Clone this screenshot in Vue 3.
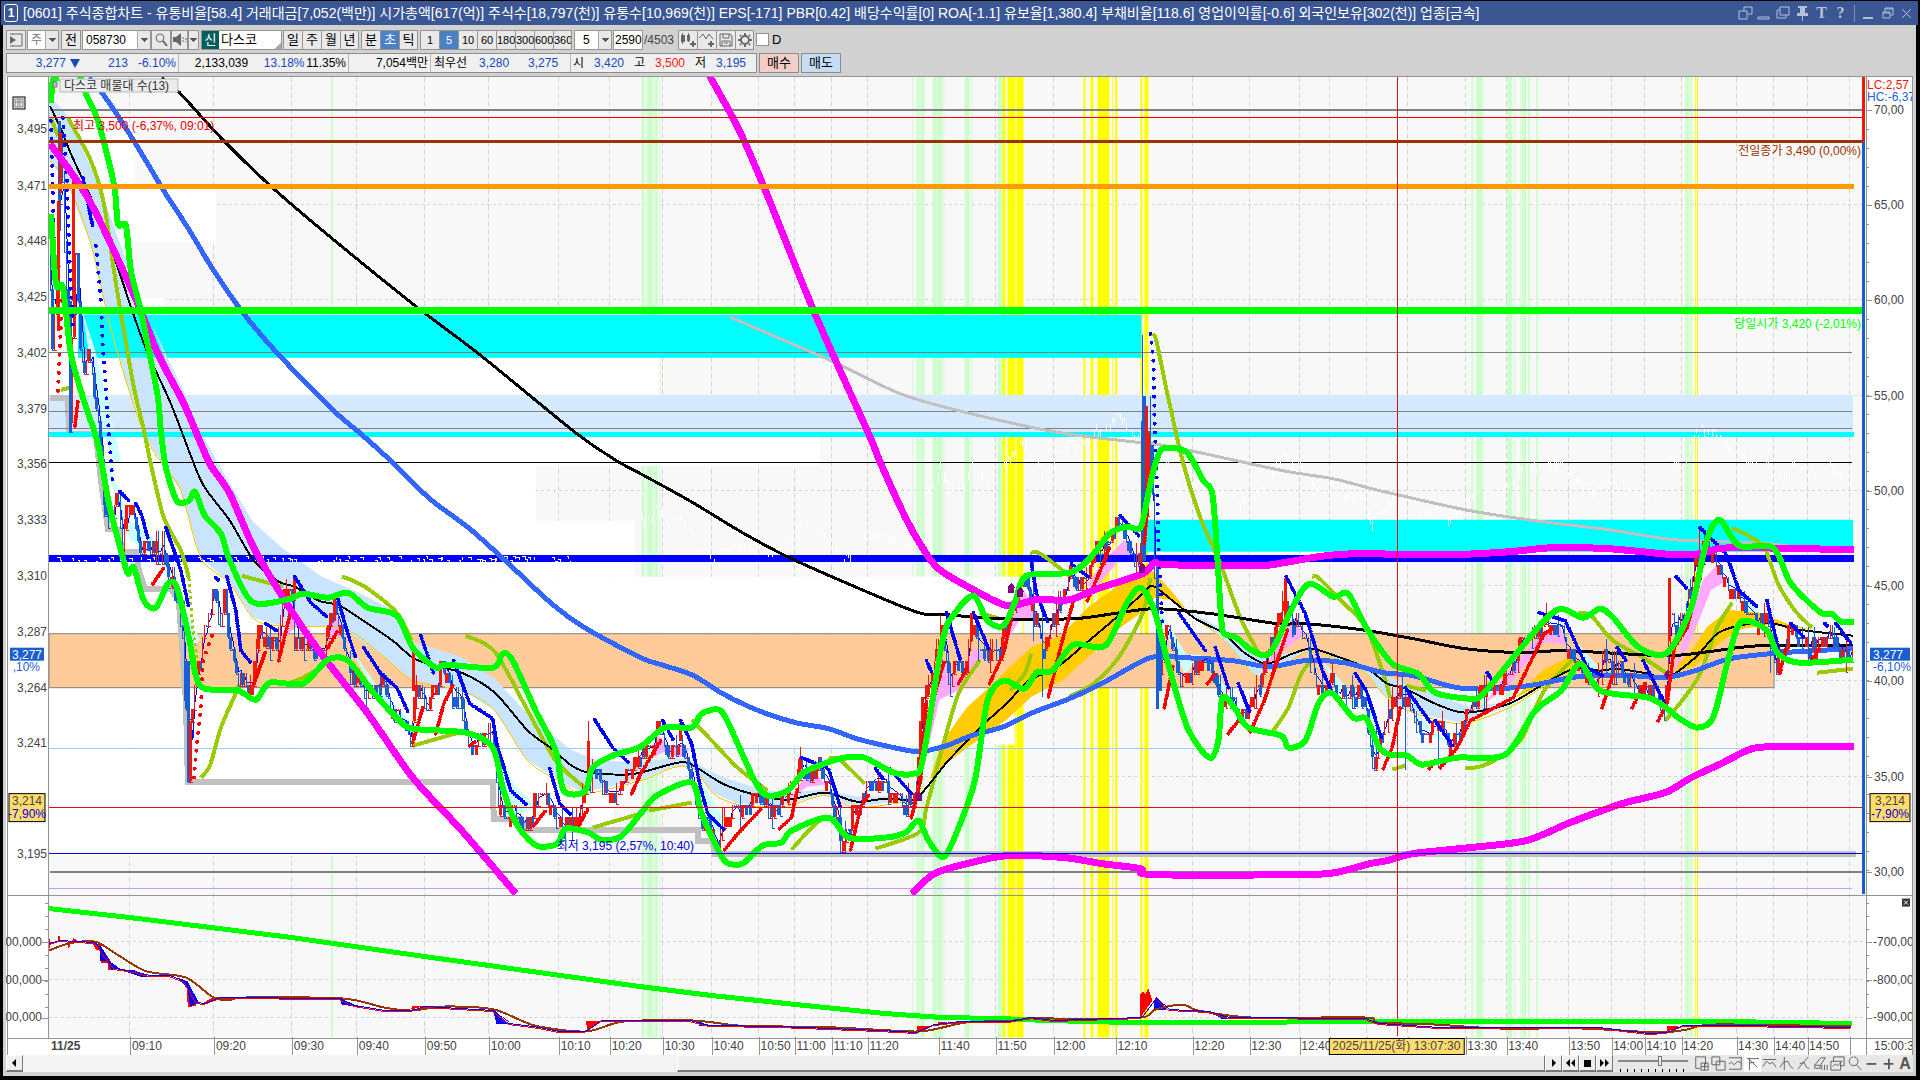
<script setup>
const titleIcons = [
  'M1 6h8v8h-8zM6 6v-4h8v7h-4', 'M1 12h11v2h-11z', 'M4 2h9v8h-9zM4 5h-3v8h9v-3', null
]
const periods = ['일', '주', '월', '년']
const units = ['분', '초', '틱']
const counts = ['1', '5', '10', '60', '180', '300', '600', '3600']

const times = [
  [130, '09:10'], [214, '09:20'], [292, '09:30'], [357, '09:40'], [425, '09:50'], [489, '10:00'],
  [559, '10:10'], [610, '10:20'], [663, '10:30'], [712, '10:40'], [759, '10:50'], [795, '11:00'],
  [832, '11:10'], [868, '11:20'], [939, '11:40'], [996, '11:50'], [1054, '12:00'], [1116, '12:10'],
  [1193, '12:20'], [1250, '12:30'], [1300, '12:40'], [1330, ''], [1367, ''], [1408, ''],
  [1466, '13:30'], [1507, '13:40'], [1569, '13:50'], [1612, '14:00'], [1645, '14:10'],
  [1682, '14:20'], [1737, '14:30'], [1774, '14:40'], [1808, '14:50'], [1850, '']
]
const leftPrices = [
  [128, '3,495'], [185, '3,471'], [240, '3,448'], [296, '3,425'], [352, '3,402'], [408, '3,379'],
  [463, '3,356'], [519, '3,333'], [575, '3,310'], [631, '3,287'], [687, '3,264'], [742, '3,241'], [853, '3,195']
]
const rightScale = [
  [110, '70,00'], [205, '65,00'], [300, '60,00'], [396, '55,00'], [491, '50,00'],
  [586, '45,00'], [681, '40,00'], [777, '35,00'], [872, '30,00']
]
const lowerScale = [[942, '-700,000'], [980, '-800,000'], [1018, '-900,000']]
const minorTicks = Array.from({ length: 41 }, (_, i) => 110 + i * 19).filter(y => y < 893)
const lowerTicks = Array.from({ length: 9 }, (_, i) => 903 + i * 13)

const greenStripes = [
  [331, 2], [642, 3], [647, 7], [655, 3], [660, 1], [913, 1], [917, 3], [921, 4], [933, 5], [939, 4],
  [944, 1], [965, 5], [972, 1], [998, 5], [1472, 2], [1477, 7], [1508, 5], [1515, 1], [1521, 1],
  [1523, 4], [1529, 2], [1537, 2], [1686, 4], [1691, 2]
]
const yellowStripes = [
  [1003, 3], [1008, 8], [1017, 7], [1084, 2], [1091, 3], [1098, 12], [1113, 1], [1116, 2],
  [1141, 2], [1145, 4], [1696, 1], [1698, 1]
]
const volumeBars = [
  [130, 86], [186, 167], [242, 82], [298, 116], [354, 611], [410, 771], [465, 487], [521, 586],
  [577, 974], [633, 974], [689, 966], [745, 586], [800, 565]
]

const smooth = list => {
  const p = list.split(' ').map(pair => pair.split(',').map(Number))
  let d = `M${p[0]}`
  for (let i = 0; i < p.length - 1; i++) {
    const a = p[i - 1] || p[i]
    const b = p[i]
    const c = p[i + 1]
    const e = p[i + 2] || c
    d += `C${b[0] + (c[0] - a[0]) / 7},${b[1] + (c[1] - a[1]) / 7} ${c[0] - (e[0] - b[0]) / 7},${c[1] - (e[1] - b[1]) / 7} ${c}`
  }
  return d
}

const longMa = '161,77 178,91 223,140 273,188 333,239 417,307 478,353 575,432 616,460 640,473 689,500 742,532 787,556 852,585 918,612 946,614 999,618 1073,618 1113,613 1154,608 1211,613 1277,623 1305,623 1361,629 1413,638 1465,648 1522,652 1565,650 1665,655 1708,651 1760,645 1853,645'
const midMa = '49,105 60,128 70,153 87,190 100,220 117,267 133,315 147,353 170,403 193,463 204,487 229,520 253,560 278,581 294,586 318,600 339,605 367,623 392,640 412,657 433,665 461,672 494,692 527,730 551,748 571,765 588,772 624,774 640,772 673,763 689,763 722,783 754,794 787,799 824,792 856,801 885,798 913,799 926,787 946,762 967,740 987,720 1007,702 1028,680 1056,667 1085,643 1118,615 1142,593 1152,585 1171,599 1195,618 1224,633 1244,652 1266,663 1292,653 1312,648 1340,657 1366,667 1387,683 1405,688 1435,703 1465,712 1509,703 1544,683 1574,668 1600,670 1617,668 1648,673 1667,677 1695,657 1717,633 1739,625 1769,622 1799,629 1853,635'
const blueMa = '88,77 102,93 133,140 163,190 187,227 213,270 243,313 277,353 333,410 360,433 390,460 429,498 469,528 510,565 551,603 584,627 640,657 664,665 693,675 722,693 758,710 795,722 828,728 856,738 889,746 918,751 946,745 971,735 1003,726 1032,712 1069,698 1101,683 1150,657 1183,657 1232,660 1269,666 1305,660 1344,662 1383,672 1413,675 1457,687 1500,688 1535,684 1578,676 1630,675 1665,677 1695,670 1730,658 1782,652 1853,648'
const silverMa = '729,316 780,338 833,361 900,393 967,412 1060,432 1133,441 1153,443 1200,452 1283,470 1333,478 1380,490 1465,509 1535,520 1609,529 1674,539 1760,542 1795,546 1854,548'
const magentas = [
  '49,143 67,167 87,197 107,237 137,303 157,353 183,403 200,443 210,465 229,493 253,547 286,603 318,650 367,713 412,777 461,830 515,893',
  '709,75 738,128 765,190 814,312 869,435 879,460 905,517 922,547 938,568 971,588 1007,605 1036,599 1069,599 1097,588 1142,573 1154,562 1167,564 1257,565 1283,562 1318,556 1353,553 1448,554 1509,551 1552,547 1609,548 1674,554 1700,553 1730,547 1854,549',
  '911,893 934,873 967,863 1007,855 1064,857 1101,863 1140,868 1152,874 1301,874 1335,872 1370,863 1387,860 1413,853 1470,847 1526,840 1570,822 1622,803 1665,792 1691,777 1721,763 1752,748 1782,746 1854,746'
]
const bands = [
  '50,102 52,79 58,77',
  '79,75 85,93 97,120 113,183 117,223 125,225 130,270 140,310 150,360 157,397 160,430 165,467 176,500 188,500 194,491 204,515 220,533 229,560 251,601 286,599 302,593 327,597 347,592 367,607 396,615 412,647 435,667 445,664 492,667 502,653 512,660 535,710 555,750 563,790 584,791 592,767 612,755 640,746 664,727 691,727 701,713 718,709 728,723 754,780 767,795 787,790 803,772 824,763 844,757 864,757 893,772 913,773 922,760 942,640 954,613 973,595 987,620 1003,625 1015,600 1026,575 1069,572 1089,558 1109,533 1126,526 1140,527 1147,497 1153,470 1160,450 1170,447 1187,452 1203,480 1212,493 1217,557 1221,620 1224,633 1236,637 1252,650 1270,652 1292,607 1309,583 1333,596 1348,593 1366,627 1392,663 1418,673 1435,692 1470,698 1483,693 1517,652 1544,620 1561,608 1583,617 1600,608 1613,617 1639,647 1667,652 1691,607 1704,550 1712,526 1721,520 1739,545 1773,547 1791,583 1821,612 1832,613 1841,621 1854,621',
  '50,213 55,283 62,287 70,353 83,400 97,443 108,503 122,557 127,573 133,567 143,600 155,607 167,583 176,587 188,637 195,675 204,688 237,690 255,699 269,682 302,683 327,659 347,660 371,690 396,717 412,728 465,732 492,747 502,787 514,820 527,838 539,846 557,843 565,828 588,832 600,839 620,836 640,813 656,795 691,782 701,813 718,850 726,862 742,863 762,845 781,842 791,830 828,817 848,837 885,837 905,832 918,820 928,840 944,856 962,817 975,777 987,700 1003,680 1024,688 1036,672 1052,670 1073,644 1105,645 1126,603 1140,587 1154,610 1167,660 1187,727 1209,757 1218,740 1222,697 1234,707 1248,727 1281,735 1288,747 1305,740 1318,703 1331,692 1353,717 1366,718 1379,747 1390,754 1407,755 1422,764 1457,757 1505,754 1535,710 1561,690 1580,663 1600,690 1648,697 1667,708 1678,717 1697,727 1713,717 1726,667 1737,627 1747,620 1767,630 1778,653 1799,662 1853,659'
]
const olives = [
  '50,117 57,135', '60,389 68,387',
  '67,117 90,160 103,203 113,270 123,330 133,387 143,430 151,468 163,517 180,550 188,577',
  '200,777 209,765 220,727 233,697 239,683', '241,575 282,586', '286,683 302,677 327,662',
  '341,576 350,579 367,588 396,612 411,640', '412,745 465,730', '465,635 494,651 527,710 555,760 584,787',
  '592,827 640,813', '648,810 691,802', '691,719 713,742 738,768 767,790', '791,849 811,827 826,815',
  '828,757 840,760 864,783', '875,848 918,832 926,807 942,747 958,693 979,660', '979,612 999,618',
  '1030,552 1040,553 1069,575', '1010,690 1024,673 1031,653', '1069,696 1093,683 1118,657 1142,613 1150,577',
  '1152,333 1156,340 1167,393 1183,463 1200,517 1220,563 1240,617 1257,650',
  '1273,730 1288,707 1301,673 1314,657', '1312,576 1318,577 1344,603 1366,627 1383,673 1390,697',
  '1405,685 1426,690', '1392,769 1405,765', '1465,768 1483,765 1505,753 1522,737 1544,690 1574,657',
  '1578,612 1591,615 1613,640 1643,657 1667,673', '1665,720 1682,700 1700,673 1717,627 1732,602',
  '1732,527 1752,537 1765,548 1778,583 1795,610 1812,627', '1817,672 1853,668'
]
const support = '49,397 67,397 68,433 95,433 100,480 107,528 119,529 120,551 135,551 138,570 144,588 170,588 178,600 185,700 187,781 492,781 493,818 520,818 525,829 697,829 697,840 712,840 714,853 1856,853'

const blueCloudA = '49,95 67,115 97,180 120,243 145,310 183,390 200,430 220,467 253,522 282,548 322,577 359,593 392,610 412,642 461,657 494,678 527,713 571,750 596,760 640,763 673,758 689,760 722,777 762,790 787,793 824,790 856,797 913,797 913,800 856,807 824,795 783,806 738,804 713,793 693,768 673,767 640,780 584,793 563,783 527,760 494,710 461,690 412,680 384,657 343,628 278,625 253,618 229,583 200,557 180,490 163,465 145,437 125,380 108,320 90,243 67,183 49,160'
const blueClouds = [
  blueCloudA,
  '1187,610 1224,630 1244,642 1264,657 1292,653 1312,648 1340,657 1366,667 1405,683 1444,698 1470,707 1509,702 1509,707 1461,723 1413,712 1387,698 1366,673 1340,660 1312,650 1296,657 1262,678 1252,673 1224,640'
]
const orangeClouds = [
  '915,797 930,780 942,743 967,708 987,690 1015,663 1032,647 1060,637 1089,607 1109,593 1130,577 1152,570 1171,590 1187,610 1171,600 1155,598 1146,610 1122,627 1097,650 1064,680 1032,697 1007,720 979,740 942,767',
  '1516,698 1544,670 1574,655 1591,670 1574,671 1544,685',
  '1667,675 1691,653 1708,627 1730,610 1760,613 1791,625 1817,630 1769,625 1739,630 1721,643 1695,667'
]
const yellowEdge = '49,160 67,183 90,243 108,320 125,380 145,437 163,465 180,490 200,557 229,583 253,618 278,625 343,628 384,657 412,680 461,690 494,710 527,760 563,783 584,793 640,780 673,767 693,768 713,793 738,804 783,806 824,795 856,807 913,800'
const yellowEdgeB = '1187,612 1224,640 1252,673 1262,678 1296,657 1312,650 1340,660 1366,673 1387,698 1413,712 1461,723 1509,707 1544,685'
const pinkClouds = [
  '916,800 926,720 942,655 950,672 960,680 975,648 984,655 960,690 940,700 926,760',
  '1000,655 1012,615 1024,590 1030,600 1040,620 1020,620', '1088,585 1105,560 1125,540 1135,560 1120,560 1095,590',
  '1262,680 1278,640 1294,618 1304,635 1285,650', '1488,700 1515,665 1544,632 1560,625 1568,645 1545,642 1510,685 1480,708',
  '1672,680 1690,620 1704,580 1718,565 1726,582 1712,590 1692,640', '790,800 803,780 818,775 826,785 808,787',
  '650,760 658,735 668,745 690,750 680,758 664,752', '280,640 292,612 306,625 296,628', '327,640 336,612 344,640 336,635'
]
const cyanClouds = [
  '100,450 109,465 130,520 163,545 190,620 200,640 190,650 176,600 160,560 130,540',
  '82,310 95,350 112,420 122,465 112,460 100,420', '345,640 380,690 410,720 412,735 380,700',
  '495,740 515,785 537,808 520,815 502,800', '700,780 722,815 728,830 712,835', '1155,600 1187,655 1202,655 1186,675 1170,640',
  '1205,655 1228,690 1244,715 1226,700', '1322,660 1350,690 1340,697', '1368,700 1381,732 1373,740',
  '1410,700 1430,728 1450,742 1430,738', '1580,645 1600,668 1590,680', '1726,575 1755,605 1770,622 1745,610'
]

const blueSar = [
  '50,120 51,158 52,200 53,250 54,290', '62,117 66,180 69,270 72,325', '82,177 92,227',
  '95,245 100,300 102,347 105,390 110,460 112,485', '119,491 128,500', '135,503 141,515 147,538',
  '165,527 180,570 188,607', '215,577 218,580', '226,576 235,610 240,650 250,662', '265,623 276,630',
  '294,576 310,602 327,617', '337,598 347,633 355,657', '363,647 380,673 396,687 408,713', '420,635 433,673',
  '453,660 469,703 492,718 496,743 510,790 527,805', '549,768 559,803 571,815', '594,719 612,747 629,763',
  '662,720 673,740', '680,720 691,743 699,783 707,813 724,830', '801,757 828,768 840,807', '875,768 884,780',
  '889,768 911,793', '926,660 932,673', '946,612 960,660', '973,612 989,650', '1031,563 1036,593 1048,623',
  '1071,563 1089,577', '1120,515 1140,537', '1150,333 1153,358 1154,413 1157,495 1158,545 1160,583 1162,625',
  '1179,613 1205,650', '1215,647 1228,687', '1238,683 1250,713', '1286,576 1305,613 1322,670 1331,690',
  '1355,673 1366,690 1381,737', '1405,687 1431,723', '1435,720 1452,745', '1487,672 1492,680',
  '1539,612 1565,620 1587,667 1602,675', '1617,647 1626,660', '1643,660 1667,707', '1676,576 1687,588',
  '1700,527 1726,553 1739,590 1758,607', '1767,600 1778,647', '1791,623 1804,637', '1825,623 1828,626', '1836,623 1851,643'
]
const redSar = [
  '61,300 59,345 57,391', '74,425 77,400', '152,583 163,567', '193,777 196,743 200,707 202,660 214,627',
  '253,683 265,650', '278,660 290,610', '327,647 337,630', '412,742 422,707', '435,733 443,703 453,683',
  '469,745 476,740', '533,825 545,810', '578,825 588,807', '631,793 640,773 660,740', '724,849 738,832 762,807',
  '779,828 791,817 797,787', '850,849 860,807 869,793', '911,817 920,780 926,700', '930,708 944,660',
  '958,683 967,667', '989,683 1003,653 1011,617', '1048,696 1060,647 1073,600', '1087,600 1101,567 1109,547',
  '1144,543 1148,490', '1164,707 1173,663', '1207,683 1215,673', '1228,733 1238,720',
  '1250,731 1264,700 1277,660 1288,627', '1383,768 1392,747 1400,707', '1429,768 1435,760',
  '1440,767 1457,747 1470,720 1513,697 1544,633 1554,627', '1602,707 1613,673', '1632,707 1645,683',
  '1658,720 1667,703 1674,647 1687,627 1700,577', '1780,672 1786,647', '1812,658 1821,647'
]
const sparse = ['50,', '62,', '95,', '1150,', '193,', '61,']
const dotGap = list => (sparse.some(s => list.startsWith(s)) ? '0 9' : '0 3')

const prices = [
  [49, 250], [52, 350], [55, 300], [58, 200], [60, 130], [64, 240], [68, 340], [70, 420], [74, 250],
  [76, 250], [80, 350], [85, 370], [88, 340], [92, 370], [97, 415], [100, 450], [105, 505], [110, 525],
  [113, 495], [120, 510], [122, 550], [127, 505], [133, 510], [140, 560], [146, 545], [155, 550], [163, 545],
  [170, 585], [178, 600], [184, 660], [188, 770], [190, 720], [195, 680], [200, 650], [207, 620], [213, 580],
  [219, 620], [224, 600], [229, 640], [240, 680], [252, 680], [258, 625], [266, 640], [276, 650], [282, 600],
  [286, 590], [292, 590], [294, 640], [305, 640], [314, 650], [325, 645], [333, 602], [340, 635], [350, 670],
  [362, 685], [372, 690], [380, 675], [392, 710], [403, 722], [410, 742], [413, 690], [420, 690], [428, 710],
  [435, 680], [443, 665], [452, 685], [460, 700], [468, 740], [478, 740], [492, 725], [497, 800], [505, 810],
  [515, 810], [526, 825], [535, 800], [545, 790], [555, 815], [567, 825], [577, 815], [587, 775], [597, 770],
  [605, 790], [615, 790], [625, 780], [634, 755], [648, 750], [658, 725], [668, 750], [679, 740], [690, 765],
  [697, 810], [702, 830], [706, 815], [717, 848], [722, 825], [732, 810], [740, 810], [750, 795], [762, 790],
  [772, 815], [785, 795], [795, 775], [800, 760], [806, 775], [820, 765], [830, 790], [840, 830], [845, 840],
  [852, 810], [860, 800], [872, 775], [885, 780], [895, 795], [905, 805], [912, 800], [917, 765], [921, 700],
  [926, 680], [930, 690], [935, 650], [942, 620], [948, 680], [955, 660], [965, 670], [971, 620], [980, 640],
  [987, 655], [1000, 645], [1010, 610], [1017, 590], [1024, 565], [1028, 590], [1035, 620], [1044, 650],
  [1050, 620], [1060, 605], [1070, 570], [1080, 590], [1090, 570], [1095, 545], [1102, 550], [1110, 540],
  [1120, 520], [1130, 550], [1137, 560], [1141, 540], [1143, 420], [1146, 500], [1149, 410], [1152, 500],
  [1156, 640], [1160, 680], [1166, 620], [1180, 680], [1190, 670], [1202, 655], [1212, 670], [1222, 700],
  [1232, 700], [1240, 715], [1250, 705], [1262, 670], [1275, 630], [1285, 595], [1290, 620], [1300, 625],
  [1308, 650], [1320, 690], [1330, 680], [1340, 695], [1355, 690], [1365, 700], [1373, 760], [1380, 740],
  [1392, 695], [1405, 690], [1415, 725], [1428, 735], [1438, 720], [1450, 740], [1465, 715], [1475, 695],
  [1485, 690], [1495, 685], [1510, 670], [1520, 640], [1530, 635], [1545, 620], [1558, 625], [1568, 650],
  [1580, 665], [1595, 685], [1605, 655], [1615, 665], [1630, 680], [1645, 690], [1655, 690], [1664, 710],
  [1669, 620], [1675, 620], [1685, 610], [1695, 560], [1705, 545], [1715, 560], [1725, 580], [1735, 590],
  [1745, 600], [1758, 625], [1765, 605], [1775, 665], [1785, 640], [1795, 625], [1805, 645], [1820, 640],
  [1832, 630], [1845, 655], [1853, 650]
]

const noise = n => {
  const v = Math.sin(n * 127.1 + 11.7) * 43758.5453
  return v - Math.floor(v)
}
const priceAt = x => {
  const i = Math.max(1, prices.findIndex(p => p[0] >= x))
  const [x0, y0] = prices[i - 1]
  const [x1, y1] = prices[i]
  return y0 + (y1 - y0) * (x - x0) / (x1 - x0)
}
const tick = y => Math.round(y / 12) * 12

let up = ''
let down = ''
let upBody = ''
let downBody = ''
let ghost = ''
let close = ''
let previous = tick(priceAt(49))
for (let x = 50; x < 1853; x += 2) {
  const y = tick(priceAt(x) + (noise(x) - 0.5) * 14)
  const tail = noise(x * 3) > 0.85 ? 12 : 2
  const rising = y < previous || (y === previous && noise(x * 7) > 0.5)
  const segment = `M${x} ${Math.min(y, previous) - (tail - 2)}V${Math.max(y, previous) + tail}h2`
  if (rising) up += segment
  else down += segment
  if (noise(x * 11) > 0.55) {
    const body = `M${x} ${Math.min(y, previous)}V${Math.max(y, previous, Math.min(y, previous) + 10)}`
    if (rising) upBody += body
    else downBody += body
  }
  close += `${x},${Math.round((priceAt(Math.max(49, x - 4)) + y) / 2)} `
  if (x > 640 && noise(x * 5) > 0.35) {
    const g = Math.round(425 + (y - 545) * 0.45)
    ghost += `M${x} ${g}v${3 + Math.round(noise(x) * 7)}`
  }
  previous = y
}
upBody += 'M413 647V690M588 740V780M680 722V740M971 612V640M1146 405V520M1148 430V500M1285 577V620M1669 577V640M294 576V600M334 598V620M73 177V300M58 200V330'
up += 'M588 720V780M1699 528V570'
downBody += 'M188 660V781M59 120V230M70 300V432M1142 420V560M1144 395V560M1157 560V708M1160 620V690'
down += 'M184 600V700M1142 334V560M1150 395V480M1033 560V640M1042 610V696M845 820V853M1376 720V769M1405 690V769M1438 720V767M1770 620V672'

let flecks = ''
for (let x = 50; x < 570; x += 3) {
  if (noise(x * 2) > 0.6) flecks += `M${x} ${556 + Math.round(noise(x) * 5)}h${1 + Math.round(noise(x + 1) * 3)}v2`
}

const oscillatorGreen = '49,909 130,918 292,938 425,957 640,987 712,996 796,1005 885,1014 942,1018 999,1019 1048,1021 1130,1023 1280,1023 1296,1022 1725,1022 1853,1024'
const oscillatorBrown = '49,951 65,945 82,942 98,943 122,958 147,972 186,978 212,997 229,1001 245,998 343,999 384,1008 412,1011 445,1007 494,1010 535,1026 586,1032 624,1022 693,1021 738,1026 783,1027 836,1028 913,1032 934,1030 967,1023 1015,1021 1040,1018 1073,1020 1142,1018 1156,1010 1183,1005 1199,1011 1252,1018 1366,1018 1378,1023 1435,1025 1500,1029 1582,1029 1660,1033 1688,1030 1717,1025 1852,1027'
const oscillatorBlue = '49,944 60,941 95,943 115,969 135,972 150,976 170,976 185,982 197,1003 205,1004 220,998 340,999 355,1006 385,1011 412,1011 425,1007 460,1009 494,1011 510,1024 540,1028 560,1032 586,1032 602,1021 690,1021 710,1026 780,1027 880,1031 917,1033 935,1025 960,1022 1010,1022 1030,1018 1055,1021 1142,1018 1157,998 1170,1010 1210,1012 1230,1018 1366,1019 1380,1024 1440,1028 1600,1028 1650,1034 1668,1033 1684,1026 1740,1026 1852,1028'
const oscillatorUp = ['49,938 51,944 49,950', '58,940 59,933 60,940', '67,942 69,950 71,942', '73,938 79,942 72,944', '92,943 96,950 100,950 101,963 108,963 108,970 116,970 100,945', '186,980 188,1008 196,1006 190,990', '200,1005 215,997 228,997 210,1003', '411,1010 413,1006 427,1006', '586,1022 602,1021 588,1031', '917,1026 928,1026 930,1028 918,1032', '938,1022 950,1022 938,1026', '1141,1018 1141,995 1144,992 1146,995 1149,989 1153,1001 1148,1008 1142,1017', '1668,1026 1680,1026 1678,1029 1668,1032']
const oscillatorDown = ['94,942 102,948 110,962 120,969 112,971 107,962 100,961 100,948', '120,970 135,971 150,977 140,977', '178,978 188,982 193,992 199,1003 190,1007 188,990', '340,999 350,1003 360,1008 342,1005', '493,1010 509,1024 497,1025', '697,1021 710,1026 700,1027', '1155,1002 1158,998 1167,1010 1155,1010', '1210,1012 1230,1019 1222,1019']

const tools = [
  'M2 1h11v9M2 1v13h5M8 8h8v8h-8zM8 12h8M12 8v8', 'M1 1h9v9h-9zM6 6h10v10h-10z',
  'M1 2h14M1 15h14M1 9l3-2 3 3 4-4 4 2M15 1v14', 'M2 3h14M5 2v14M5 4l9 9M5 8l6-1',
  'M1 4h15M1 12l4-6 4 3 3-2 4 6', 'M6 1v15M1 13l4-6 5-1 3 6 3 2', 'M2 15l12-14M4 9l5-2 3 6 3 1',
  'M2 10l7-8h5l-6 9zM2 10v4h6v-3M10 10v6M13 10v6M16 10v6', 'M1 6h11v10h-11zM4 6v-5h12v10h-4M3 12l3-3 3 2 5-6',
  'M7 1a5 5 0 1 0 1 0M11 10l5 6'
]
</script>

<template>
  <div class="window">
    <header class="title">
      <span class="number">1</span>
      <h1>[0601] 주식종합차트 - 유통비율[58.4] 거래대금[7,052(백만)] 시가총액[617(억)] 주식수[18,797(천)] 유통수[10,969(천)] EPS[-171] PBR[0.42] 배당수익률[0] ROA[-1.1] 유보율[1,380.4] 부채비율[118.6] 영업이익률[-0.6] 외국인보유[302(천)] 업종[금속]</h1>
      <nav class="window-buttons">
        <button v-for="(icon, i) in titleIcons" :key="i" :aria-label="['복제', '내리기', '겹치기', '고정'][i]">
          <svg viewBox="0 0 15 16"><path v-if="icon" :d="icon" /><path v-else class="solid" d="M3 1h9v2h-2v5h3v3h-5v5h-1v-5h-5v-3h3v-5h-2z" /></svg>
        </button>
        <button class="serif">T</button>
        <button class="serif">?</button>
        <i class="divider"></i>
        <button aria-label="최소화"><svg viewBox="0 0 15 16"><path class="solid" d="M2 12h10v2h-10z" /></svg></button>
        <button aria-label="복원"><svg viewBox="0 0 15 16"><path d="M3 7h7v6h-7zM5 7v-4h8v7h-3M5 4h8M3 8h7" /></svg></button>
        <button aria-label="닫기"><svg viewBox="0 0 15 16"><path d="M3 4l9 9M12 4l-9 9" /></svg></button>
      </nav>
    </header>

    <div class="body">
      <div class="toolbar">
        <button class="key" aria-label="메뉴"><svg viewBox="0 0 18 18"><path d="M5 3h10v12h-10M3 3h3M3 15h3" /><path class="solid" d="M3 5l6 4-6 4z" /></svg></button>
        <label class="combo market"><select aria-label="시장"><option>주</option></select></label>
        <button class="key last">전</button>
        <label class="combo code"><input value="058730" aria-label="종목코드" /></label>
        <button class="key" aria-label="검색"><svg viewBox="0 0 18 18"><circle cx="8" cy="7" r="4" /><path class="bold" d="M11 10l4 5" /></svg></button>
        <button class="key sound" aria-label="소리"><svg viewBox="0 0 18 18"><path class="solid" d="M1 6h3l5-4v13l-5-4h-3z" /><path d="M11 6v6M14 7v4" stroke-dasharray="2 1" /></svg></button>
        <button class="drop" aria-label="소리 설정"></button>
        <span class="stock"><b>신</b><input value="다스코" aria-label="종목명" /></span>
        <div class="keys"><button v-for="p in periods" :key="p" class="key">{{ p }}</button></div>
        <div class="keys"><button v-for="u in units" :key="u" class="key" :class="{ on: u === '초' }">{{ u }}</button></div>
        <div class="keys counts"><button v-for="c in counts" :key="c" class="key" :class="{ on: c === '5' }">{{ c }}</button></div>
        <label class="combo interval"><select aria-label="간격"><option>5</option></select></label>
        <input class="range" value="2590" aria-label="조회 개수" />
        <span class="total">/4503</span>
        <div class="keys">
          <button class="key" aria-label="차트 추가"><svg viewBox="0 0 18 18"><path class="solid" d="M2 4h4v7h-4zM8 4h3v6h-3zM3 2h1v11h-1zM9 2h1v9h-1zM11 12h2v-2h2v2h2v2h-2v2h-2v-2h-2z" /></svg></button>
          <button class="key" aria-label="지표 추가"><svg viewBox="0 0 18 18"><path d="M1 7l4-4 3 5 3-5 4 5" /><path class="solid" d="M10 12h2v-2h2v2h2v2h-2v2h-2v-2h-2z" /></svg></button>
          <button class="key" aria-label="저장"><svg viewBox="0 0 18 18"><path d="M3 3h10l2 2v10h-12zM6 3v4h6v-4M5 15v-5h8v5M7 12h4" /></svg></button>
          <button class="key" aria-label="설정"><svg viewBox="0 0 18 18"><circle class="bold" cx="9" cy="9" r="4" /><path class="bold" d="M9 2v2M9 14v2M2 9h2M14 9h2M4 4l1 1M13 13l1 1M4 14l1-1M13 5l1-1" /></svg></button>
        </div>
        <label class="check"><input type="checkbox" /> D</label>
      </div>

      <div class="quotes">
        <div class="quote-box">
          <div class="cell first"><span class="blue w60">3,277</span><span class="arrow"></span><span class="blue w48">213</span><span class="blue w48">-6.10%</span></div>
          <div class="cell second"><span class="w70">2,133,039</span><span class="blue w57">13.18%</span><span class="w41">11.35%</span></div>
          <div class="cell third"><span>7,054백만</span></div>
          <div class="cell fourth"><span>최우선</span><span class="blue w41">3,280</span><span class="blue w48">3,275</span></div>
          <div class="cell fifth"><span>시</span><span class="blue">3,420</span><span>고</span><span class="red">3,500</span><span>저</span><span class="blue">3,195</span></div>
        </div>
        <button class="trade buy">매수</button>
        <button class="trade sell">매도</button>
      </div>

      <main class="chart">
        <svg class="plot" viewBox="6 76 1908 980" role="img" aria-label="다스코 초봉 차트">
          <rect x="6" y="76" width="1908" height="980" fill="#fff" />
          <rect x="49" y="77" width="1817" height="961" fill="#f8f8f8" />
          <g class="grid">
            <path v-for="t in times" :key="t[0]" :d="`M${t[0]} 77V1038`" stroke-dasharray="5 3" />
            <path v-for="r in rightScale.slice(1, 8)" :key="r[0]" :d="`M49 ${r[0]}H1864`" stroke-dasharray="3 3" />
            <path v-for="r in lowerScale" :key="r[0]" :d="`M49 ${r[0]}H1864`" stroke-dasharray="3 3" />
          </g>
          <rect v-for="s in greenStripes" :key="s[0]" :x="s[0]" y="77" :width="s[1]" height="961" fill="#cfc" />
          <rect v-for="s in yellowStripes" :key="s[0]" :x="s[0]" y="77" :width="s[1]" height="961" fill="#ff0" />
          <rect v-for="v in volumeBars" :key="v[0]" x="49" :y="v[0]" :width="v[1]" height="56" fill="#fff" />

          <rect x="49" y="395" width="1805" height="40" fill="#d6eaff" />
          <rect x="78" y="315" width="1064" height="43" fill="#0ff" />
          <rect x="1142" y="520" width="712" height="32" fill="#0ff" />
          <rect x="49" y="634" width="1726" height="54" fill="#fc9" stroke="#808080" />
          <polygon v-for="c in blueClouds" :key="c" :points="c" fill="#c9e4ff" />
          <polygon points="78,315 148,315 165,358 92,358" fill="#0ff" />
          <polygon v-for="c in cyanClouds" :key="c" :points="c" fill="#cff" />
          <polygon v-for="c in orangeClouds" :key="c" :points="c" fill="#fc0" />
          <polygon v-for="c in pinkClouds" :key="c" :points="c" fill="#faf" />

          <g class="lines" transform="translate(1 1)">
            <polyline :points="support" stroke="#c0c0c0" stroke-width="6" />
            <path d="M49 109H1863M49 871H1863" stroke="#808080" stroke-width="2" />
            <path d="M48 352H1852M48 411H1852M48 428H1852" stroke="#808080" />
            <path d="M48 462H1852" stroke="#000" />
            <path d="M48 748H1852" stroke="#9cf" />
            <path d="M48 888H1852" stroke="#c9f" />
            <path d="M48 434H1854" stroke="#0ff" stroke-width="5" />
            <path d="M48 558H1854" stroke="#00f" stroke-width="7" />
            <path :d="flecks" stroke="#fff" />
            <path :d="ghost" stroke="#fff" />
            <path :d="smooth(silverMa)" stroke="#c0c0c0" stroke-width="3" />
            <path :d="smooth(yellowEdge)" stroke="#fc0" />
            <path :d="smooth(yellowEdgeB)" stroke="#fc0" />
            <path v-for="o in olives" :key="o" :d="smooth(o)" stroke="#9c0" stroke-width="4" />
            <path d="M188 577L192 630L197 663" stroke="#9c0" stroke-width="3" stroke-dasharray="3 3" />
            <path :d="smooth(midMa)" stroke="#000" stroke-width="2" />
            <path :d="smooth(longMa)" stroke="#000" stroke-width="3" />
            <path :d="smooth(blueMa)" stroke="#36f" stroke-width="5" />
            <polyline :points="close" stroke="#00f" />
            <path :d="down" stroke="#1a5fd0" />
            <path :d="up" stroke="#f01808" />
            <path :d="downBody" stroke="#1a5fd0" stroke-width="3" />
            <path :d="upBody" stroke="#f01808" stroke-width="3" />
            <polyline v-for="b in blueSar" :key="b" class="dots" :points="b" stroke="#00f" :stroke-dasharray="dotGap(b)" />
            <polyline v-for="r in redSar" :key="r" class="dots" :points="r" stroke="#f00" :stroke-dasharray="dotGap(r)" />
            <path v-for="m in magentas" :key="m" :d="smooth(m)" stroke="#f0f" stroke-width="7" />
            <path v-for="b in bands" :key="b" :d="smooth(b)" stroke="#0f0" stroke-width="6" />
            <path class="mark" d="M1007 587l4-5 4 5h-1v5h-6v-5zM1016 591l4-5 4 5h-1v5h-6v-5zM1138 567l4-5 4 5h-1v5h-6v-5zM914 796l4-5 4 5h-1v4h-6v-4zM1664 674l3-5 3 5-3 5z" />
            <path d="M48 117H1863" stroke="#f00000" />
            <path d="M48 141H1863" stroke="#930" stroke-width="3" />
            <path d="M48 186H1854" stroke="#f90" stroke-width="5" />
            <path d="M48 310H1863" stroke="#0f0" stroke-width="7" />
            <path d="M48 807H1863M1397 76V1036" stroke="#e01010" />
            <path d="M48 853H1863" stroke="#00d" />
            <path d="M1863 76V141" stroke="#f01808" stroke-width="3" />
            <path d="M1863 141V893" stroke="#1a5fd0" stroke-width="3" />
          </g>

          <g class="lines">
            <polyline :points="oscillatorGreen" stroke="#0f0" stroke-width="5" />
            <polygon v-for="p in oscillatorUp" :key="p" :points="p" fill="#f00" />
            <polygon v-for="p in oscillatorDown" :key="p" :points="p" fill="#00f" />
            <path :d="smooth(oscillatorBrown)" stroke="#930" stroke-width="2" />
            <polyline :points="oscillatorBlue" stroke="#f00" transform="translate(-1 1)" />
            <polyline :points="oscillatorBlue" stroke="#00f" />
          </g>

          <rect x="6" y="77" width="42" height="961" fill="#fff" />
          <rect x="1867" y="77" width="46" height="961" fill="#fff" />
          <g class="frame">
            <path d="M7 77H1914V1056H7ZM7 896H1914M7 1039H1914M49 77V1039M1867 77V1056" />
            <path v-for="t in times" :key="t[0]" :d="`M${t[0] + 1} 1038V1056`" />
            <path v-for="y in minorTicks" :key="y" :d="`M1867 ${y + 1}h3`" />
            <path v-for="r in rightScale" :key="r[0]" :d="`M1867 ${r[0] + 1}h6`" />
            <path v-for="y in lowerTicks" :key="y" :d="`M1867 ${y + 1}h3M48 ${y + 1}h-3`" />
            <path v-for="r in lowerScale" :key="r[0]" :d="`M1867 ${r[0] + 1}h6M48 ${r[0] + 1}h-6`" />
          </g>
          <g class="labels">
            <text v-for="p in leftPrices" :key="p[1]" x="47" :y="p[0] + 5" text-anchor="end">{{ p[1] }}</text>
            <text v-for="r in lowerScale" :key="r[1]" x="42" :y="r[0] + 4" text-anchor="end">00,000</text>
            <text v-for="r in rightScale" :key="r[1]" x="1875" :y="r[0] + 4">{{ r[1] }}</text>
            <text v-for="t in times" :key="t[0]" :x="t[0] + 2" y="1051">{{ t[1] }}</text>
            <text class="strong" x="51" y="1051">11/25</text>
          </g>
          <svg x="1867" y="77" width="46" height="978" viewBox="1867 77 46 978">
            <text x="1868" y="89" fill="#f01808">LC:2,57</text>
            <text x="1868" y="101" fill="#1a5fd0">HC:-6,37</text>
            <text v-for="r in lowerScale" :key="r[1]" x="1874" :y="r[0] + 4" fill="#444">{{ r[1] }}</text>
            <text x="1875" y="1051" fill="#444">15:00:30</text>
            <rect x="1903" y="899" width="8" height="8" fill="#333" />
            <path d="M1905 901l4 4M1909 901l-4 4" stroke="#fff" />
          </svg>
          <text x="73" y="130" fill="#e00000">최고 3,500 (-6,37%, 09:01)</text>
          <text x="557" y="850" fill="#00d">최저 3,195 (2,57%, 10:40)</text>
          <text x="1862" y="155" text-anchor="end" fill="#930">전일종가 3,490 (0,00%)</text>
          <text x="1862" y="328" text-anchor="end" fill="#0f0">당일시가 3,420 (-2,01%)</text>
          <rect x="60" y="79" width="118" height="13" fill="#ededed" stroke="#b8b8b8" />
          <rect x="53" y="82" width="4" height="5" fill="#bbb" stroke="#777" />
          <text x="64" y="90" fill="#333">다스코 매물대 수(13)</text>
          <rect x="13" y="97" width="12" height="12" fill="#eee" stroke="#000" />
          <path d="M15 99h8v8h-8zM15 102h8M18 99v8M20 99v8" fill="none" stroke="#888" />

          <rect x="10" y="648" width="34" height="13" fill="#1a5fd0" />
          <text x="27" y="659" text-anchor="middle" fill="#fff">3,277</text>
          <text x="40" y="671" text-anchor="end" fill="#1a5fd0">,10%</text>
          <rect x="1871" y="648" width="40" height="13" fill="#1a5fd0" />
          <text x="1889" y="659" text-anchor="middle" fill="#fff">3,277</text>
          <text x="1874" y="671" fill="#1a5fd0">-6,10%</text>
          <rect x="9" y="794" width="36" height="28" fill="#ffdc6c" stroke="#000" />
          <text x="27" y="805" text-anchor="middle" fill="#444">3,214</text>
          <text x="27" y="818" text-anchor="middle" fill="#00d">-7,90%</text>
          <rect x="1871" y="794" width="40" height="28" fill="#ffdc6c" stroke="#000" />
          <text x="1891" y="805" text-anchor="middle" fill="#444">3,214</text>
          <text x="1891" y="818" text-anchor="middle" fill="#00d">-7,90%</text>
          <rect x="1330" y="1039" width="135" height="16" fill="#ffdc6c" stroke="#000" />
          <text x="1397" y="1051" text-anchor="middle" fill="#444">2025/11/25(화) 13:07:30</text>
        </svg>
      </main>

      <footer class="bottom">
        <button class="step" aria-label="왼쪽"><svg viewBox="0 0 15 15"><path class="black" d="M9 3v8l-4-4z" /></svg></button>
        <div class="track"><div class="thumb"></div></div>
        <button class="step" aria-label="오른쪽"><svg viewBox="0 0 15 15"><path class="black" d="M6 3v8l4-4z" /></svg></button>
        <button class="step" aria-label="되감기"><svg viewBox="0 0 15 15"><path class="black" d="M7 3v8l-4-4zM12 3v8l-4-4z" /></svg></button>
        <button class="step" aria-label="정지"><svg viewBox="0 0 15 15"><path class="black" d="M4 4h7v7h-7z" /></svg></button>
        <button class="step" aria-label="빨리감기"><svg viewBox="0 0 15 15"><path class="black" d="M3 3v8l4-4zM8 3v8l4-4z" /></svg></button>
        <label class="speed"><input type="range" min="0" max="10" value="6" aria-label="재생 속도" /></label>
        <div class="tools">
          <button v-for="(tool, i) in tools" :key="i" :class="{ pressed: i === 3 }" :aria-label="'도구 ' + (i + 1)"><svg viewBox="0 0 17 17"><path :d="tool" /></svg></button>
          <button aria-label="축소"><svg viewBox="0 0 17 17"><path class="heavy" d="M3 9h11" /></svg></button>
          <button aria-label="확대"><svg viewBox="0 0 17 17"><path class="heavy" d="M3 9h11M9 3v12" /></svg></button>
          <button class="auto">A</button>
        </div>
      </footer>
    </div>
  </div>
</template>

<style>
body {
  background: #000;
}
</style>

<style scoped>
* {
  box-sizing: border-box;
}
.window {
  padding: 1px 2px 3px 1px;
  background: #000;
  color: #000;
  font: 12px/16px "Liberation Sans", "Noto Sans CJK KR", sans-serif;
}
button,
input,
select {
  margin: 0;
  padding: 0;
  border: 0;
  border-radius: 0;
  background: none;
  color: inherit;
  font: inherit;
}
.title {
  display: flex;
  align-items: center;
  height: 24px;
  padding: 0 4px 0 3px;
  background: #3a5794;
  color: #fff;
}
.number {
  width: 14px;
  height: 18px;
  margin-right: 5px;
  border: 1px solid #fff;
  border-radius: 3px;
  font-weight: bold;
  text-align: center;
}
h1 {
  flex: 1;
  margin: 0;
  font-size: 14px;
  font-weight: normal;
  line-height: 24px;
  white-space: nowrap;
}
.window-buttons {
  display: flex;
  align-items: center;
  gap: 4px;
  color: #b3c0dc;
}
.window-buttons button {
  width: 15px;
  height: 18px;
}
.window-buttons svg {
  display: block;
  width: 15px;
  height: 16px;
}
.window-buttons .serif {
  font: bold 16px/18px "Liberation Serif", serif;
}
.divider {
  width: 1px;
  height: 17px;
  margin: 0 2px;
  background: #7c8fb8;
}
button svg path,
button svg circle {
  fill: none;
  stroke: currentColor;
}
button svg .solid {
  fill: currentColor;
  stroke: none;
}
button svg .bold,
button svg .heavy {
  stroke-width: 2;
}
button svg .black {
  fill: #000;
  stroke: none;
}
.body {
  margin: 0 2px;
  padding: 4px 3px 4px;
  background: #d1d1d1;
}
.toolbar {
  display: flex;
  align-items: center;
  height: 21px;
  font-size: 13px;
}
.key {
  flex: none;
  width: 20px;
  height: 20px;
  border: 1px solid #949494;
  background: #e9e9e9;
  overflow: hidden;
  white-space: nowrap;
}
.key svg {
  display: block;
  width: 18px;
  height: 18px;
  color: #666;
}
.keys {
  display: flex;
  margin-right: 2px;
}
.keys .key {
  width: 19px;
  border-right-width: 0;
}
.keys .key:last-child {
  border-right-width: 1px;
}
.counts {
  font-size: 11px;
}
.key.on {
  background: #4a80c4;
  color: #fff;
}
.combo {
  position: relative;
  height: 20px;
  border: 1px solid #949494;
  background: #fff;
  font-size: 12px;
}
.combo::after,
.drop::after {
  content: "";
  position: absolute;
  top: 0;
  right: 0;
  width: 12px;
  height: 18px;
  border-left: 1px solid #aaa;
  pointer-events: none;
  background: linear-gradient(#555, #555) center 7px / 7px 1px no-repeat, linear-gradient(#555, #555) center 8px / 5px 1px no-repeat, linear-gradient(#555, #555) center 9px / 3px 1px no-repeat, linear-gradient(#555, #555) center 10px / 1px 1px no-repeat, #e9e9e9;
}
.combo select,
.combo input {
  display: block;
  width: 100%;
  height: 18px;
  padding-left: 3px;
  appearance: none;
}
.market {
  width: 32px;
  margin: 0 2px 0 1px;
  color: #777;
}
.last {
  margin-right: 1px;
}
.code {
  width: 69px;
}
.sound {
  width: 17px;
}
.drop {
  position: relative;
  width: 11px;
  height: 20px;
  margin-right: 2px;
  border: 1px solid #949494;
}
.drop::after {
  width: 9px;
  border: 0;
}
.stock {
  display: flex;
  width: 81px;
  height: 20px;
  margin-right: 1px;
  border: 1px solid #949494;
  background: linear-gradient(135deg, transparent 50%, #aaa 50%) right bottom / 7px 7px no-repeat, #fff;
}
.stock b {
  width: 17px;
  background: #005f5c;
  color: #fff;
  font-weight: normal;
  line-height: 18px;
  text-align: center;
}
.stock input {
  width: 60px;
  padding-left: 2px;
}
.interval {
  width: 38px;
  margin-right: 1px;
}
.interval select {
  padding-left: 8px;
}
.range {
  width: 30px;
  height: 20px;
  padding-left: 1px;
  border: 1px solid #949494;
  background: #fff;
  font-size: 12px;
}
.total {
  width: 35px;
  padding-left: 1px;
  color: #444;
  font-size: 12px;
}
.check {
  display: flex;
  align-items: center;
  gap: 3px;
}
.check input {
  width: 13px;
  height: 13px;
  border: 1px solid #949494;
  background: #fff;
  appearance: none;
}
.quotes {
  display: flex;
  gap: 2px;
  height: 20px;
  margin: 3px 0;
}
.quote-box {
  display: flex;
  width: 751px;
  border: 1px solid #8c8c8c;
  background: #f0f0f0;
}
.cell {
  display: flex;
  align-items: center;
  flex: none;
  padding-right: 2px;
  border-right: 1px solid #b8b8b8;
  text-align: right;
  white-space: nowrap;
}
.cell:last-child {
  border: 0;
}
.first {
  width: 172px;
}
.second {
  width: 170px;
}
.third {
  width: 82px;
  justify-content: flex-end;
}
.fourth {
  width: 140px;
  padding-left: 3px;
}
.fifth {
  flex: 1;
  justify-content: space-between;
  padding: 0 10px 0 2px;
}
.arrow {
  margin-left: 4px;
  border: 5px solid transparent;
  border-top: 9px solid #1548b8;
  border-bottom: 0;
}
.blue {
  color: #1548b8;
}
.red {
  color: #f01808;
}
.w41 {
  width: 42px;
}
.w48 {
  width: 49px;
}
.w57 {
  width: 57px;
}
.w60 {
  width: 60px;
}
.w70 {
  width: 70px;
}
.trade {
  width: 40px;
  border: 1px solid #8c8c8c;
  font-size: 13px;
}
.buy {
  background: #f5cdc8;
}
.sell {
  background: #c5ddf5;
}
.plot {
  display: block;
  width: 100%;
  height: auto;
}
.grid path {
  stroke: #d3d3d3;
}
.lines polyline,
.lines path {
  fill: none;
}
.lines,
.grid {
  shape-rendering: crispEdges;
}
.lines .mark {
  fill: #800080;
}
.lines .dots {
  stroke-width: 4;
  stroke-linecap: round;
}
.frame {
  fill: none;
  stroke: #949494;
  shape-rendering: crispEdges;
}
.labels {
  fill: #444;
}
.strong {
  font-weight: bold;
}
.bottom {
  display: flex;
  height: 17px;
  background: #e8e8e8;
}
.step {
  flex: none;
  width: 17px;
  height: 17px;
  border: 1px solid #fff;
  border-right-color: #777;
  border-bottom: 2px solid #777;
  background: #efefef;
}
.step svg {
  display: block;
  width: 15px;
  height: 15px;
}
.track {
  display: flex;
  justify-content: flex-end;
  flex: 1;
  background: repeating-conic-gradient(#fff 0 25%, #eaeaea 0 50%) 0 0 / 2px 2px;
}
.thumb {
  width: 57%;
  border: 1px solid #fff;
  border-right-color: #777;
  border-bottom: 2px solid #777;
  background: #efefef;
}
.speed {
  width: 80px;
  padding: 0 5px;
  background: repeating-linear-gradient(90deg, #000 0 1px, transparent 1px 7px) 7px bottom / 68px 3px no-repeat;
}
.speed input {
  display: block;
  width: 70px;
  height: 11px;
  background: linear-gradient(#888, #888) center / 100% 2px no-repeat;
  appearance: none;
}
.speed input::-webkit-slider-thumb {
  width: 4px;
  height: 10px;
  border: 1px solid #777;
  background: #eee;
  appearance: none;
}
.tools {
  display: flex;
  width: 220px;
  justify-content: space-between;
  color: #555;
}
.tools button {
  width: 17px;
  height: 17px;
}
.tools svg {
  display: block;
  width: 15px;
  height: 15px;
  margin: 1px;
}
.tools .pressed {
  background: #fff;
}
.tools .auto {
  font-weight: bold;
  font-size: 16px;
}
</style>
